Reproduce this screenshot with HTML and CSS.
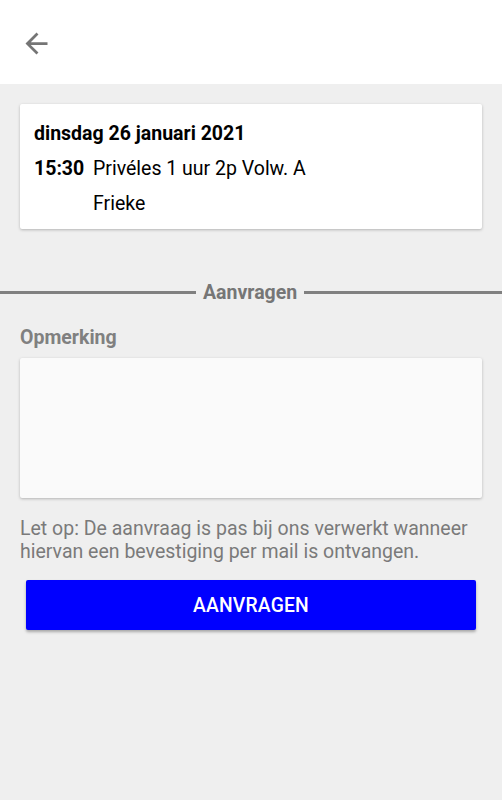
FILE: index.html
```html
<!DOCTYPE html>
<html lang="nl">
<head>
<meta charset="utf-8">
<link rel="stylesheet" href="styles.css">
</head>
<body>
<header class="topbar">
  <svg class="back" viewBox="0 0 24 24" width="33" height="33"><path d="M20 11H7.83l5.59-5.59L12 4l-8 8 8 8 1.41-1.41L7.83 13H20v-2z" fill="#757575"/></svg>
</header>
<main class="content">
  <section class="card">
    <div class="date">dinsdag 26 januari 2021</div>
    <div class="row">
      <span class="time">15:30</span>
      <div class="info">
        <div class="line">Privéles 1 uur 2p Volw. A</div>
        <div class="line">Frieke</div>
      </div>
    </div>
  </section>
  <div class="divider"><span>Aanvragen</span></div>
  <form class="form">
    <label class="label">Opmerking</label>
    <textarea class="textarea"></textarea>
    <p class="note">Let op: De aanvraag is pas bij ons verwerkt wanneer hiervan een bevestiging per mail is ontvangen.</p>
    <button type="button" class="btn">AANVRAGEN</button>
  </form>
</main>
</body>
</html>
```
FILE: styles.css
```css
* { box-sizing: border-box; }
html, body { margin: 0; padding: 0; }
body {
  background: #efefef;
  font-family: Roboto, "Noto Sans", sans-serif;
  width: 502px;
  height: 800px;
  overflow: hidden;
}
.topbar {
  background: #fff;
  height: 84px;
  display: flex;
  align-items: center;
  padding-left: 20px;
}
.back { display: block; margin-top: 2px; }
.content { padding: 20px 20px 0; }
.card {
  background: #fff;
  border-radius: 2px;
  box-shadow: 0 1px 3px rgba(0,0,0,0.25);
  padding: 17px 14px 11px;
  height: 125px;
  color: #000;
}
.date { font-weight: 700; font-size: 19.5px; line-height: 26px; }
.row { display: flex; margin-top: 9px; font-size: 19.5px; }
.time { font-weight: 700; width: 59px; line-height: 26px; }
.line { line-height: 26px; margin-bottom: 9px; }
.divider {
  margin: 52px -20px 0;
  display: flex;
  align-items: center;
  gap: 7px;
  color: #767676;
  font-weight: 700;
  font-size: 19.5px;
}
.divider::before, .divider::after {
  content: "";
  flex: 1;
  height: 3px;
  background: #808080;
}
.divider::before { flex: 0 0 196px; }
.form { display: flex; flex-direction: column; }
.label {
  margin-top: 22px;
  font-weight: 700;
  font-size: 19.5px;
  color: #808080;
  line-height: 24px;
}
.textarea {
  margin-top: 8px;
  height: 140px;
  background: #fafafa;
  border: none;
  border-radius: 2px;
  box-shadow: 0 1px 3px rgba(0,0,0,0.25);
  resize: none;
  font-family: inherit;
}
.note {
  margin: 19px 0 0;
  font-size: 19.5px;
  line-height: 23px;
  color: #7a7a7a;
}
.btn {
  margin: 17px 6px 0;
  height: 50px;
  background: #0000ff;
  color: #fff;
  border: none;
  border-radius: 2px;
  box-shadow: 0 2px 3px rgba(0,0,0,0.3);
  font-family: inherit;
  font-weight: 500;
  font-size: 19.3px;
  letter-spacing: 0.2px;
}
```
